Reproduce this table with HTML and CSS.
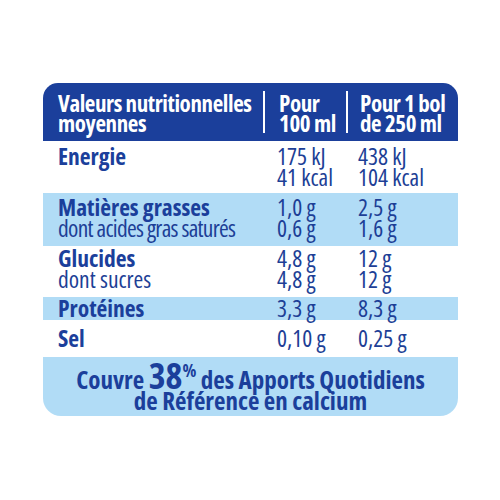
FILE: index.html
```html
<!DOCTYPE html>
<html lang="fr">
<head>
<meta charset="UTF-8">
<title>Valeurs nutritionnelles</title>
<link rel="stylesheet" href="styles.css">
</head>
<body>
  <div class="tableau">
    <div class="ligne entete">
      <div class="cellule">Valeurs nutritionnelles<br>moyennes</div>
      <div class="cellule sep">Pour<br>100 ml</div>
      <div class="cellule sep">Pour 1 bol<br>de 250 ml</div>
    </div>
    <div class="ligne energie">
      <div class="cellule"><b>Energie</b></div>
      <div class="cellule">175 kJ<br>41 kcal</div>
      <div class="cellule">438 kJ<br>104 kcal</div>
    </div>
    <div class="ligne bleu matieres">
      <div class="cellule"><b>Matières grasses</b><br><span class="serre">dont acides gras saturés</span></div>
      <div class="cellule">1,0 g<br>0,6 g</div>
      <div class="cellule">2,5 g<br>1,6 g</div>
    </div>
    <div class="ligne glucides">
      <div class="cellule"><b>Glucides</b><br>dont sucres</div>
      <div class="cellule">4,8 g<br>4,8 g</div>
      <div class="cellule">12 g<br>12 g</div>
    </div>
    <div class="ligne bleu proteines">
      <div class="cellule"><b>Protéines</b></div>
      <div class="cellule">3,3 g</div>
      <div class="cellule">8,3 g</div>
    </div>
    <div class="ligne sel">
      <div class="cellule"><b>Sel</b></div>
      <div class="cellule">0,10 g</div>
      <div class="cellule">0,25 g</div>
    </div>
    <div class="pied">
      Couvre <span class="pourcent">38<sup>%</sup></span> des Apports Quotidiens<br>de Référence en calcium
    </div>
  </div>
</body>
</html>
```

FILE: styles.css
```css
body {
  margin: 0;
  background: #ffffff;
  font-family: "Open Sans", sans-serif;
  font-stretch: 75%;
  color: #1d3f96;
}

.tableau {
  width: 415px;
  margin: 83px 0 0 43px;
}

.ligne {
  display: grid;
  grid-template-columns: 220px 83px 112px;
  font-size: 23.5px;
  line-height: 21px;
  box-sizing: border-box;
}

.ligne b {
  font-weight: bold;
  color: #1b3f9b;
}

/* ligne resserrée pour tenir dans la colonne */
.serre {
  letter-spacing: -0.7px;
}

.cellule {
  padding-left: 15px;
  white-space: nowrap;
}

/* colonnes de valeurs */
.ligne .cellule + .cellule {
  padding-left: 14px;
}

.ligne .cellule + .cellule + .cellule {
  padding-left: 12px;
}

.bleu {
  background: #b1dcf6;
}

/* en-tête bleu foncé */
.entete {
  background: #1b3f9b;
  color: #ffffff;
  font-weight: bold;
  font-size: 23px;
  letter-spacing: -0.4px;
  line-height: 20px;
  border-radius: 15px 15px 0 0;
  height: 58px;
  padding: 8px 0 10px;
}

.entete .cellule {
  padding-top: 2px;
}

.entete .sep {
  border-left: 2px solid #ffffff;
  padding-left: 12px;
}

.entete .sep + .sep {
  padding-left: 10px;
}

.energie {
  height: 52px;
  padding-top: 5px;
}

.matieres {
  height: 53px;
  padding-top: 4px;
}

.glucides {
  height: 51px;
  padding-top: 2px;
}

.proteines {
  height: 23px;
  padding-top: 1px;
}

.sel {
  height: 37px;
  padding-top: 8px;
}

.pied {
  background: #b1dcf6;
  border-radius: 0 0 18px 18px;
  height: 59px;
  box-sizing: border-box;
  padding-top: 12px;
  text-align: center;
  font-weight: bold;
  font-size: 25px;
  line-height: 21px;
  color: #1b3f9b;
}

.pourcent {
  font-size: 36px;
  line-height: 0;
}

.pourcent sup {
  font-size: 18px;
  line-height: 0;
  vertical-align: 12px;
}
```
